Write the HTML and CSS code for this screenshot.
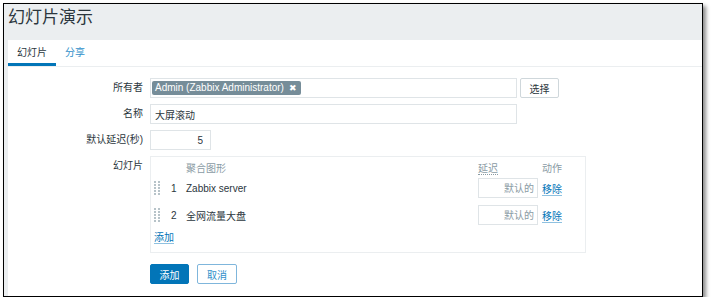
FILE: index.html
```html
<!DOCTYPE html>
<html>

<head>
    <meta charset="utf-8">
    <link rel="stylesheet" href="styles.css">
</head>

<body>
    <div class="frame">
        <div class="header">
            <h1 class="title">幻灯片演示</h1>
        </div>

        <div class="panel">
            <ul class="tabs">
                <li class="tab tab-active">幻灯片</li>
                <li class="tab"><a class="tab-link">分享</a></li>
            </ul>

            <form class="form">
                <label class="label">所有者</label>
                <div class="field">
                    <div class="multiselect">
                        <span class="chip">Admin (Zabbix Administrator) <span class="chip-x">&#x2716;</span></span>
                    </div>
                    <button type="button" class="btn-grey">选择</button>
                </div>

                <label class="label">名称</label>
                <div class="field">
                    <input class="input input-name" type="text" value="大屏滚动">
                </div>

                <label class="label">默认延迟(秒)</label>
                <div class="field">
                    <input class="input input-delay" type="text" value="5">
                </div>

                <label class="label label-top">幻灯片</label>
                <div class="field">
                    <div class="slides">
                        <div class="slides-head">
                            <span></span>
                            <span></span>
                            <span>聚合图形</span>
                            <span><span class="hint">延迟</span></span>
                            <span>动作</span>
                        </div>

                        <div class="slide-row">
                            <span class="handle">
                                <svg width="6" height="15" viewBox="0 0 6 15">
                                    <g fill="#b7c3c9">
                                        <rect x="0" y="0" width="2" height="2"/><rect x="4" y="0" width="2" height="2"/>
                                        <rect x="0" y="3" width="2" height="2"/><rect x="4" y="3" width="2" height="2"/>
                                        <rect x="0" y="6" width="2" height="2"/><rect x="4" y="6" width="2" height="2"/>
                                        <rect x="0" y="9" width="2" height="2"/><rect x="4" y="9" width="2" height="2"/>
                                        <rect x="0" y="12" width="2" height="2"/><rect x="4" y="12" width="2" height="2"/>
                                    </g>
                                </svg>
                            </span>
                            <span class="num">1</span>
                            <span>Zabbix server</span>
                            <span><input class="input input-step" type="text" placeholder="默认的"></span>
                            <span><a class="link">移除</a></span>
                        </div>

                        <div class="slide-row">
                            <span class="handle">
                                <svg width="6" height="15" viewBox="0 0 6 15">
                                    <g fill="#b7c3c9">
                                        <rect x="0" y="0" width="2" height="2"/><rect x="4" y="0" width="2" height="2"/>
                                        <rect x="0" y="3" width="2" height="2"/><rect x="4" y="3" width="2" height="2"/>
                                        <rect x="0" y="6" width="2" height="2"/><rect x="4" y="6" width="2" height="2"/>
                                        <rect x="0" y="9" width="2" height="2"/><rect x="4" y="9" width="2" height="2"/>
                                        <rect x="0" y="12" width="2" height="2"/><rect x="4" y="12" width="2" height="2"/>
                                    </g>
                                </svg>
                            </span>
                            <span class="num">2</span>
                            <span>全网流量大盘</span>
                            <span><input class="input input-step" type="text" placeholder="默认的"></span>
                            <span><a class="link">移除</a></span>
                        </div>

                        <div class="slides-add">
                            <a class="link">添加</a>
                        </div>
                    </div>
                </div>

                <span></span>
                <div class="field buttons">
                    <button type="button" class="btn-main">添加</button>
                    <button type="button" class="btn-alt">取消</button>
                </div>
            </form>
        </div>
    </div>
</body>

</html>
```

FILE: styles.css
```css
body {
    margin: 0;
    background-color: white;
    font-family: "Liberation Sans", Arial, "Noto Sans CJK SC", sans-serif;
    font-size: 10px;
    color: #2b363d;
}

.frame {
    box-sizing: border-box;
    width: 700px;
    height: 294px;
    margin: 3px 0 0 3px;
    border: 1px solid #000;
    background-color: #ebeef0;
    box-shadow: 3px 3px 4px rgba(0, 0, 0, 0.45);
    display: flex;
    flex-direction: column;
    overflow: hidden;
}

.header {
    height: 36px;
    padding: 4px 0 0 4px;
    box-sizing: border-box;
}

.title {
    margin: 0;
    font-size: 17px;
    font-weight: normal;
    line-height: 20px;
    color: #2b363d;
}

.panel {
    flex: 1;
    margin-left: 4px;
    background-color: white;
}

.tabs {
    list-style: none;
    margin: 0;
    padding: 0;
    display: flex;
    border-bottom: 1px solid #ebeef0;
}

.tab {
    padding: 2px 9px 0 9px;
    line-height: 21px;
    border-bottom: 3px solid transparent;
}

.tab-active {
    border-bottom-color: #0275b8;
}

.tab-link {
    color: #2f8fca;
}

.form {
    display: grid;
    grid-template-columns: 135px 1fr;
    column-gap: 7px;
    row-gap: 6px;
    padding-top: 11px;
}

.label {
    text-align: right;
    line-height: 20px;
}

.field {
    display: flex;
    align-items: center;
}

.multiselect {
    box-sizing: border-box;
    width: 367px;
    height: 20px;
    border: 1px solid #dfe4e7;
    display: flex;
    align-items: center;
    padding-left: 1px;
}

.chip {
    background-color: #768d99;
    color: white;
    line-height: 14px;
    padding: 0 4px 0 3px;
    border-radius: 2px;
}

.chip-x {
    font-size: 9px;
    margin-left: 2px;
}

.btn-grey {
    margin-left: 3px;
    width: 39px;
    height: 20px;
    padding: 0;
    background-color: white;
    border: 1px solid #cfd7db;
    border-radius: 2px;
    font-family: inherit;
    font-size: 10px;
    color: #2b363d;
}

.input {
    box-sizing: border-box;
    height: 20px;
    border: 1px solid #dfe4e7;
    padding: 0 4px;
    font-family: inherit;
    font-size: 10px;
    color: #2b363d;
    outline: none;
}

.input-name {
    width: 367px;
}

.input-delay {
    width: 61px;
    text-align: right;
    padding-right: 7px;
}

.input-step {
    width: 60px;
    text-align: right;
    padding-right: 3px;
}

.input-step::placeholder {
    color: #8a9ba4;
}

.label-top {
    align-self: start;
}

.slides {
    box-sizing: border-box;
    width: 436px;
    border: 1px solid #ebeef0;
    padding-bottom: 4px;
}

.slides-head,
.slide-row {
    display: grid;
    grid-template-columns: 14px 21px 1fr 64px 43px;
    align-items: center;
}

.slides-head {
    height: 21px;
    color: #8a9ba4;
}

.hint {
    border-bottom: 1px dotted #8a9ba4;
}

.slide-row {
    height: 20px;
}

.slide-row + .slide-row {
    margin-top: 7px;
}

.handle {
    display: flex;
    padding-left: 3px;
}

.num {
    padding-left: 6px;
}

.slides-add {
    height: 20px;
    line-height: 20px;
    margin-top: 3px;
    padding-left: 3px;
}

.link {
    color: #0275b8;
    border-bottom: 1px solid #8fc1e0;
    cursor: pointer;
}

.buttons {
    margin-top: 5px;
    gap: 8px;
}

.btn-main {
    width: 39px;
    height: 20px;
    padding: 0;
    background-color: #0275b8;
    border: 1px solid #0275b8;
    border-radius: 2px;
    color: white;
    font-family: inherit;
    font-size: 10px;
}

.btn-alt {
    width: 40px;
    height: 20px;
    padding: 0;
    background-color: white;
    border: 1px solid #7fb6dc;
    border-radius: 2px;
    color: #2f8fca;
    font-family: inherit;
    font-size: 10px;
}
```
